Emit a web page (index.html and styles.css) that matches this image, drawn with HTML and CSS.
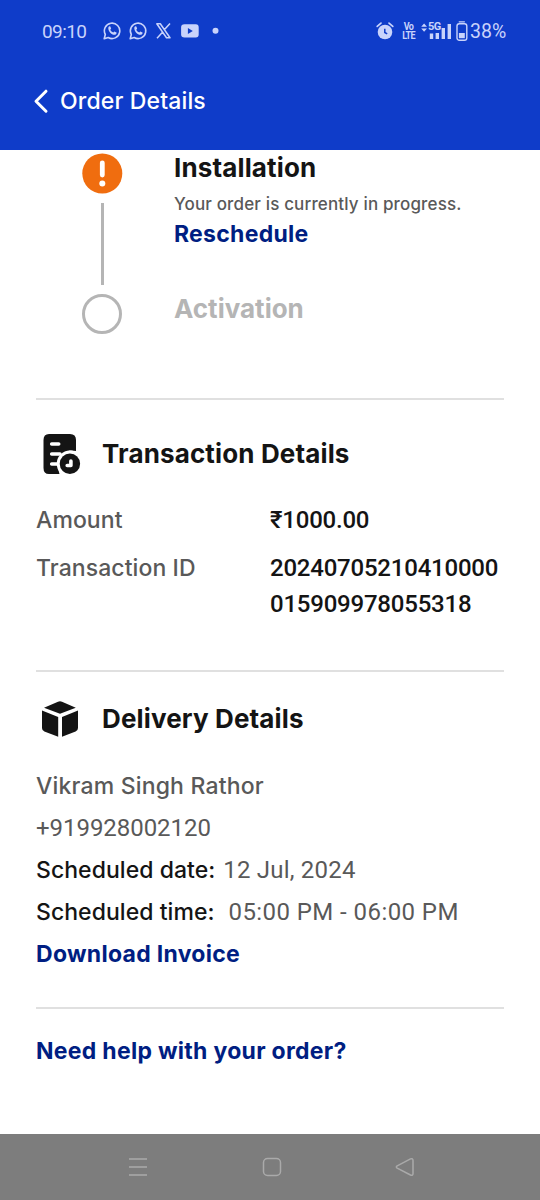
FILE: index.html
```html
<!DOCTYPE html>
<html lang="en">
<head>
<meta charset="utf-8">
<title>Order Details</title>
<link rel="stylesheet" href="styles.css">
</head>
<body>
<div class="screen">
  <header class="top">
    <div class="status">
      <span class="clock">09:10</span>
      <svg class="status-left" width="118" height="20" viewBox="0 0 118 20">
        <g fill="none" stroke="currentColor" stroke-width="1.6" stroke-linejoin="round">
          <path d="M1.2 17.8 2.3 13.5A7.7 7.7 0 1 1 5.2 16.5Z"/>
          <path d="M27.2 17.8 28.3 13.5A7.7 7.7 0 1 1 31.2 16.5Z"/>
          <path d="M53.8 2.8H57.3L67 16.8H63.5ZM67 2.4 61.3 8.8M59.5 11.2 54 17.2" stroke-width="1.5"/>
        </g>
        <g fill="currentColor">
          <path d="M5.4 6.2C6 5 7.1 5 7.4 5.7L8.1 7.3C8.2 7.8 7.5 8.4 7.3 8.8C7.9 10.1 9 11 10.3 11.5L11.3 10.4L13.5 11.5C13.9 11.8 13.4 13.4 12.2 13.8C9 14.5 4.6 9.9 5.4 6.2Z"/>
          <path d="M31.4 6.2C32 5 33.1 5 33.4 5.7L34.1 7.3C34.2 7.8 33.5 8.4 33.3 8.8C33.9 10.1 35 11 36.3 11.5L37.3 10.4L39.5 11.5C39.9 11.8 39.4 13.4 38.2 13.8C35 14.5 30.6 9.9 31.4 6.2Z"/>
          <path fill-rule="evenodd" d="M81.5 3.3H92.8Q95.7 3.3 95.7 6.3V13.4Q95.7 16.4 92.8 16.4H81.5Q78.1 16.4 78.1 13.4V6.3Q78.1 3.3 81.5 3.3ZM84.9 6.9V12.9L89.8 9.9Z"/>
          <circle cx="112.5" cy="9.7" r="3"/>
        </g>
      </svg>
      <svg class="status-alarm" width="18" height="20" viewBox="0 0 18 20">
        <circle cx="9" cy="11" r="7.3" fill="currentColor"/>
        <path d="M1.2 5.4 5 2.1M16.8 5.4 13 2.1" stroke="currentColor" stroke-width="1.7" stroke-linecap="round"/>
        <path d="M8.8 7.8V11.5L11.2 12.9" fill="none" stroke="#0f3cc9" stroke-width="1.5"/>
      </svg>
      <span class="volte"><span>Vo</span><span>LTE</span></span>
      <span class="signal">
        <svg width="31" height="20" viewBox="0 0 31 20" fill="currentColor">
          <path d="M.2 5.8 3.1 2.6 6 5.8ZM.2 7.6H6L3.1 10.8Z"/>
          <rect x="8.8" y="12.5" width="3.4" height="5.5"/>
          <rect x="14.6" y="11.5" width="3.4" height="6.5"/>
          <rect x="20.6" y="7" width="3.4" height="11"/>
          <rect x="26.6" y="3" width="3.4" height="15"/>
        </svg>
        <span class="net">5G</span>
      </span>
      <svg class="battery" width="12" height="20" viewBox="0 0 12 20">
        <rect x="1" y="2.7" width="9.8" height="16.5" rx="2.3" fill="none" stroke="currentColor" stroke-width="1.4"/>
        <path d="M3.2.8H8.4" stroke="currentColor" stroke-width="1.3" stroke-linecap="round"/>
        <rect x="2.9" y="12" width="5.9" height="5.2" fill="currentColor"/>
      </svg>
      <span class="percent">38%</span>
    </div>
    <div class="nav">
      <svg width="16" height="26" viewBox="0 0 16 26" fill="none" stroke="#fff" stroke-width="3" stroke-linecap="round" stroke-linejoin="round"><path d="M13 3.2 3 13.2 13 23.2"/></svg>
      <h1>Order Details</h1>
    </div>
  </header>

  <main>
    <section class="steps">
      <div class="rail">
        <svg width="42" height="42" viewBox="0 0 42 42"><circle cx="21.3" cy="20.5" r="20" fill="#f06d0f"/><path d="M21.3 9.8V22" stroke="#fff" stroke-width="4.8" stroke-linecap="round"/><circle cx="21.3" cy="30.4" r="3" fill="#fff"/></svg>
        <i class="bar"></i>
        <i class="ring"></i>
      </div>
      <div class="step-text">
        <h2>Installation</h2>
        <p class="note">Your order is currently in progress.</p>
        <a class="link">Reschedule</a>
        <h2 class="pending">Activation</h2>
      </div>
    </section>

    <section class="transaction">
      <div class="title">
        <svg width="48" height="48" viewBox="0 0 48 48">
          <path fill="#141414" d="M13 4H34Q40 4 40 10V21C28 18 19 27 23.5 44H13Q7.5 44 7.5 38V10Q7.5 4 13 4Z"/>
          <path d="M15.7 14H22.7M15.7 24H24M15.7 34H21" stroke="#fff" stroke-width="3.6" stroke-linecap="round"/>
          <circle cx="33.9" cy="33.8" r="13.2" fill="#fff"/>
          <circle cx="33.9" cy="33.8" r="10.2" fill="#141414"/>
          <path d="M34.9 31V35.5H31.2" fill="none" stroke="#fff" stroke-width="3.6" stroke-linecap="round" stroke-linejoin="round"/>
        </svg>
        <h2>Transaction Details</h2>
      </div>
      <dl>
        <dt>Amount</dt><dd>₹1000.00</dd>
        <dt>Transaction ID</dt><dd>20240705210410000<br>015909978055318</dd>
      </dl>
    </section>

    <section class="delivery">
      <div class="title">
        <svg width="48" height="48" viewBox="0 0 48 48" fill="#141414">
          <path d="M8 12.7 22 6.7Q24 5.8 26 6.700L39.8 12.7 24 18.8Z"/>
          <path d="M6 15.6 22.2 22V41.7L8.4 36.5Q6 35.5 6 33Z"/>
          <path d="M42 15.6 26 22V41.7L39.6 36.5Q42 35.5 42 33Z"/>
        </svg>
        <h2>Delivery Details</h2>
      </div>
      <div class="lines">
        <p>Vikram Singh Rathor</p>
        <p><span class="phone">+919928002120</span></p>
        <p><b>Scheduled date:</b><span class="date">12 Jul, 2024</span></p>
        <p><b>Scheduled time:</b><span class="time">05:00 PM - 06:00 PM</span></p>
        <p><a class="link">Download Invoice</a></p>
      </div>
    </section>

    <section class="help"><a class="link">Need help with your order?</a></section>
  </main>

  <footer>
    <svg width="20" height="20" viewBox="0 0 20 20"><path d="M1 2H19M1 10H19M1 18H19"/></svg>
    <svg width="20" height="20" viewBox="0 0 20 20"><rect x="1.5" y="1.5" width="17" height="17" rx="4"/></svg>
    <svg width="20" height="20" viewBox="0 0 20 20"><path d="M2.2 8.8 15.5 1.9Q18 1 18 3.5V16.5Q18 19 15.5 18L2.2 11.2Q.5 10 2.2 8.8Z"/></svg>
  </footer>
</div>
</body>
</html>
```
FILE: styles.css
```css
* { box-sizing: border-box; }
body { margin: 0; background: #fff; font-family: Inter, Roboto, "Liberation Sans", sans-serif; }
h1, h2, p, dl, dd { margin: 0; }
svg { display: block; flex: none; }
.screen { width: 540px; height: 1200px; display: flex; flex-direction: column; }

.top { height: 150px; background: #0f3cc9; color: #fff; flex: none; }
.status { display: flex; align-items: center; height: 62px; padding-left: 42px; color: #c9d3fb; font-family: Roboto, sans-serif; }
.clock { width: 61px; font-size: 19px; letter-spacing: -.6px; }
.status-alarm { margin-left: 155px; }
.volte { display: flex; flex-direction: column; align-items: center; width: 13px; margin-left: 8px; font-size: 9px; line-height: 8px; font-weight: 700; letter-spacing: -.6px; transform: scaleY(1.15); }
.signal { position: relative; margin-left: 6px; }
.net { position: absolute; left: 7px; top: 0; font-size: 11px; line-height: 12px; font-weight: 700; letter-spacing: -.5px; background: #0f3cc9; }
.battery { margin-left: 4px; }
.percent { margin-left: 2px; font-size: 19.5px; }
.nav { display: flex; align-items: center; gap: 11px; padding-left: 33px; height: 78px; }
h1 { font-size: 23px; font-weight: 500; line-height: 36px; letter-spacing: .15px; }

main { flex: 1; padding: 0 36px; color: #141414; }
section + section { border-top: 2px solid #e0e0e0; }
h2 { font-size: 26px; line-height: 36px; font-weight: 650; letter-spacing: .14px; white-space: nowrap; }
.link { color: #001e82; font-size: 23px; line-height: 36px; font-weight: 680; letter-spacing: .29px; }

.steps { display: flex; height: 248px; padding: 3px 0 0 45px; }
.rail { display: flex; flex-direction: column; align-items: center; width: 42px; }
.bar { width: 3px; height: 82px; margin: 8px 0 9px; background: #b5b5b5; }
.ring { width: 40px; height: 40px; border: 3px solid #b5b5b5; border-radius: 50%; }
.step-text { margin-left: 51px; margin-top: -3px; display: flex; flex-direction: column; align-items: flex-start; }
.note { font-size: 17px; line-height: 24px; margin-top: 6px; font-weight: 450; letter-spacing: .15px; color: #595959; white-space: nowrap; }
.pending { margin-top: 39px; color: #b5b5b5; letter-spacing: 0; }

.transaction { height: 272px; padding-top: 30px; }
.title { display: flex; align-items: center; gap: 18px; }
dl { display: grid; grid-template-columns: 234px 1fr; row-gap: 12px; margin-top: 24px; font-size: 23px; line-height: 36px; }
dt { color: #595959; font-weight: 450; letter-spacing: .08px; }
dd { color: #141414; font-family: Roboto, sans-serif; font-size: 24px; font-weight: 480; letter-spacing: -.22px; white-space: nowrap; }

.delivery { height: 337px; padding-top: 23px; }
.lines { margin-top: 22px; font-size: 23px; line-height: 42px; font-weight: 450; letter-spacing: .18px; color: #595959; }
.lines p { white-space: nowrap; height: 42px; }
.lines b { font-weight: 500; letter-spacing: .05px; color: #141414; }
.phone, .date, .time { font-family: Roboto, sans-serif; font-size: 24px; }
.phone { letter-spacing: -.05px; }
.date { margin-left: 8px; letter-spacing: .2px; }
.time { margin-left: 14px; letter-spacing: .43px; }
.help { padding-top: 24px; }

footer { display: flex; justify-content: space-between; height: 66px; padding: 23px 125px 0 128px; background: #7d7d7d; }
footer svg { fill: none; stroke: #aaa; stroke-width: 1.5; }
```
